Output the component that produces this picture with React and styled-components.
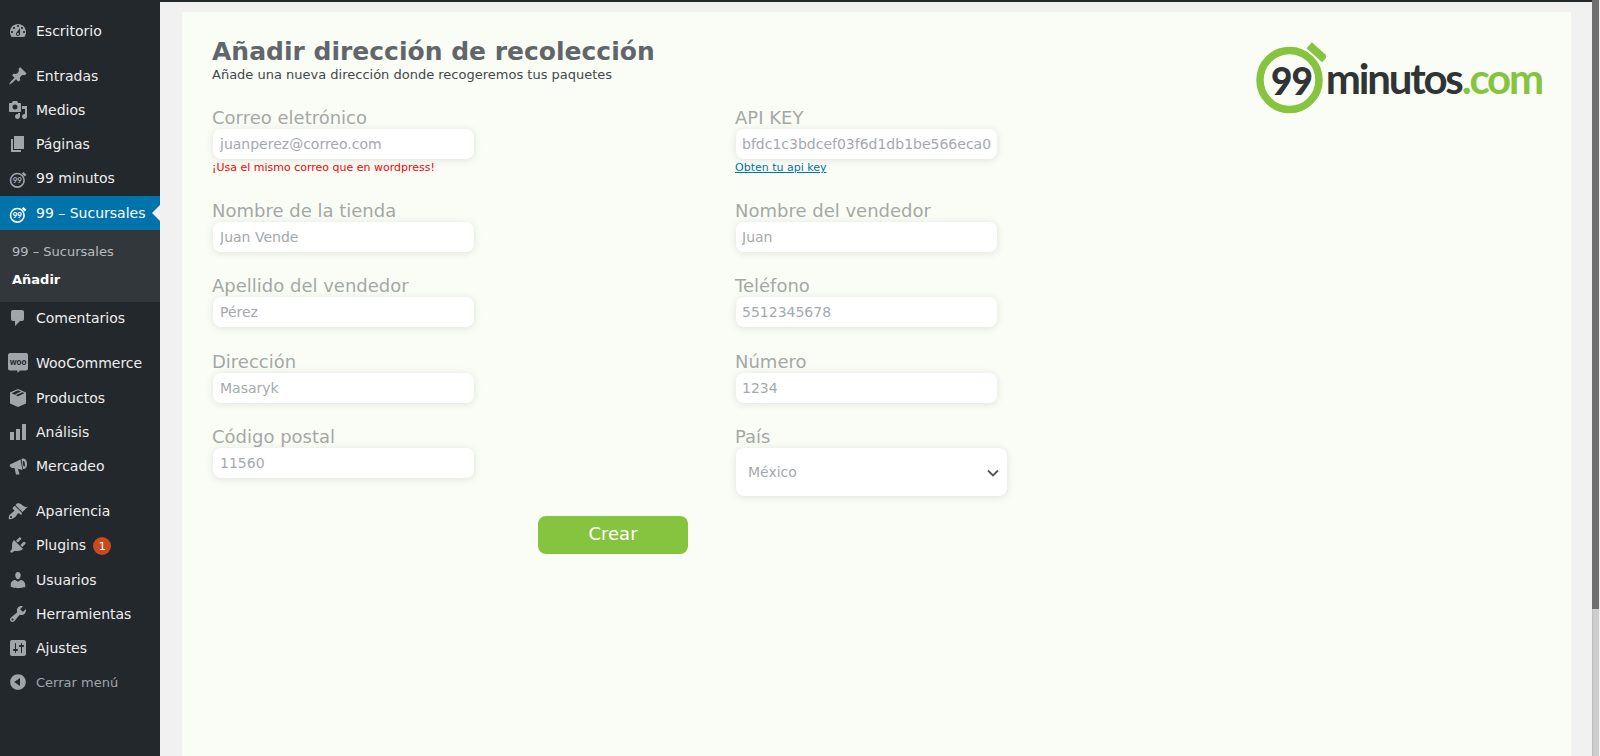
import React from 'react';
import styled, { createGlobalStyle } from 'styled-components';

const Global = createGlobalStyle`
  html, body { margin: 0; padding: 0; height: 100%; overflow: hidden; background: #f1f1f1; }
  * { box-sizing: border-box; }
  body { font-family: "DejaVu Sans", sans-serif; }
`;

const Page = styled.div`display: flex; width: 1600px; height: 756px; overflow: hidden; background: #f1f1f1;`;
const Sidebar = styled.nav`width: 160px; flex: none; height: 756px; background: #23282d; padding-top: 14px;`;
const MenuGroup = styled.div`margin-bottom: ${p => p.$gap || 11}px;`;
const MenuItem = styled.a`
  position: relative; display: flex; align-items: center; height: ${p => p.$h || 34.2}px; padding-left: 8px; gap: 8px;
  margin-top: ${p => p.$mt || 0}px;
  color: ${p => (p.$active ? '#fff' : p.$muted ? '#a0a5aa' : '#eee')};
  background: ${p => (p.$active ? '#0073aa' : 'transparent')};
  font-size: ${p => (p.$muted ? '13px' : '14px')};
  svg { color: ${p => (p.$active ? '#fff' : '#a0a5aa')}; flex: none; }
  ${p => p.$active && `&:after { content: ""; position: absolute; right: 0; top: 50%; margin-top: -8px; border: 8px solid transparent; border-right-color: #f1f1f1; }`}
`;
const Submenu = styled.div`background: #32373c; padding: 7px 0 8px; height: 72px;`;
const SubItem = styled.a`display: flex; align-items: center; height: 28.5px; padding-left: 12px; font-size: 13px; font-weight: ${p => (p.$current ? 700 : 400)}; color: ${p => (p.$current ? '#fff' : 'rgba(240,245,250,.7)')};`;
const Badge = styled.span`display: inline-flex; align-items: center; justify-content: center; width: 18px; height: 18px; border-radius: 50%; background: #ca4a1f; color: #fff; font-size: 11px; margin: 2px 0 0 -1px;`;

const Main = styled.main`flex: 1; min-width: 0; border-top: 2px solid #23282d; padding: 10px 21px 0 22px;`;
const Panel = styled.section`height: 760px; background: #f9fdf6; padding: 24px 30px 0;`;
const Header = styled.header`display: flex; justify-content: space-between; height: 73px;`;
const Title = styled.h1`margin: 0; font-size: 25px; line-height: 31px; font-weight: 700; color: #62666b;`;
const Subtitle = styled.p`margin: 0; font-size: 13px; line-height: 15px; color: #43474b;`;
const Logo = styled.div`display: flex; align-items: flex-start; height: 74px; margin: 6px -1px 0 0; color: #303435;`;
const LogoText = styled.span`font-family: Lato, sans-serif; font-weight: 700; font-size: 42px; line-height: 40px; letter-spacing: -2.2px; margin-top: 16px;`;
const LogoCom = styled.span`color: #86c440;`;

const FormGrid = styled.div`display: grid; grid-template-columns: 523px 523px; row-gap: 25.2px;`;
const Field = styled.div`display: flex; flex-direction: column; align-items: flex-start;`;
const Label = styled.label`font-size: 18px; line-height: 18px; margin-bottom: 2px; color: #a6a8a6;`;
const Input = styled.input`
  width: 261px; height: 30px; margin-left: 1px; border: 0; border-radius: 8px; background: #fff; padding: 0 ${p => p.$pad || 7}px; outline: none;
  font: 14px "DejaVu Sans", sans-serif; color: #a5a9ad; box-shadow: 0 1px 8px rgba(0,0,0,.11);
  &::placeholder { color: #a5a9ad; opacity: 1; }
`;
const Help = styled.div`font-size: 11px; line-height: 18px; color: #f00;`;
const HelpLink = styled.a`font-size: 11px; line-height: 18px; color: #0073aa; text-decoration: underline;`;
const SelectWrap = styled.div`position: relative; width: 271px; height: 48px; margin-left: 1px; border-radius: 8px; background: #fff; box-shadow: 0 1px 8px rgba(0,0,0,.11);
  svg { position: absolute; right: 8px; top: 21px; color: #555; }`;
const Select = styled.select`appearance: none; width: 100%; height: 100%; border: 0; background: transparent; padding: 0 12px; font: 14px "DejaVu Sans", sans-serif; color: #a5a9ad; outline: none;`;
const ButtonRow = styled.div`display: flex; justify-content: center; width: 802px; margin-top: 20px;`;
const Button = styled.button`width: 150px; height: 38px; border: 0; border-radius: 8px; background: #86c440; color: #fff; padding: 0 0 2px; font: 18px "DejaVu Sans", sans-serif;`;

const Scrollbar = styled.div`width: 8px; flex: none; height: 756px; background: #cdcdcd; border-left: 1px solid #bdbdbd; border-right: 1px solid #f1f1f1;`;
const Thumb = styled.div`height: 609px; margin-left: -1px; background: #6f6f6f;`;

const D = ({ d }) => (
  <svg width="20" height="20" viewBox="0 0 20 20" fill="currentColor"><path fillRule="evenodd" d={d} /></svg>
);
const P = {
  dash: 'M3.76 16h12.48c1.1-1.37 1.76-3.11 1.76-5 0-4.42-3.58-8-8-8s-8 3.58-8 8c0 1.89.66 3.63 1.76 5zM10 4c.55 0 1 .45 1 1s-.45 1-1 1-1-.45-1-1 .45-1 1-1zM6 6c.55 0 1 .45 1 1s-.45 1-1 1-1-.45-1-1 .45-1 1-1zm8 0c.55 0 1 .45 1 1s-.45 1-1 1-1-.45-1-1 .45-1 1-1zm-5.37 5.55L12 7v6c0 1.1-.9 2-2 2s-2-.9-2-2c0-.57.24-1.08.63-1.45zM4 10c.55 0 1 .45 1 1s-.45 1-1 1-1-.45-1-1 .45-1 1-1zm12 0c.55 0 1 .45 1 1s-.45 1-1 1-1-.45-1-1 .45-1 1-1zm-5 3c0-.55-.45-1-1-1s-1 .45-1 1 .45 1 1 1 1-.45 1-1z',
  pin: 'M10.44 3.02l1.82-1.82 6.36 6.35-1.83 1.82c-1.05-.68-2.48-.57-3.41.36l-.75.75c-.92.93-1.04 2.35-.35 3.41l-1.83 1.82-2.41-2.41-2.8 2.79c-.42.42-3.38 2.71-3.8 2.29s1.86-3.39 2.28-3.81l2.79-2.79L4.1 9.36l1.83-1.82c1.05.69 2.48.57 3.4-.36l.75-.75c.93-.92 1.05-2.35.36-3.41z',
  media: 'M13 11V4c0-.55-.45-1-1-1h-1.67L9 1H5L3.67 3H2c-.55 0-1 .45-1 1v7c0 .55.45 1 1 1h10c.55 0 1-.45 1-1zM7 4.5c1.38 0 2.5 1.12 2.5 2.5S8.38 9.5 7 9.5 4.5 8.38 4.5 7 5.62 4.5 7 4.5zM14 6h5v10.5c0 1.38-1.12 2.5-2.5 2.5S14 17.88 14 16.5s1.12-2.5 2.5-2.5c.17 0 .34.02.5.05V9h-3V6zm-4 8.05V13h2v3.5c0 1.38-1.12 2.5-2.5 2.5S7 17.88 7 16.5 8.12 14 9.5 14c.17 0 .34.02.5.05z',
  page: 'M6 15V2h10v13H6zm-1 1h8v2H3V5h2v11z',
  comment: 'M5 2h9c1.1 0 2 .9 2 2v7c0 1.1-.9 2-2 2h-2l-5 5v-5H5c-1.1 0-2-.9-2-2V4c0-1.1.9-2 2-2z',
  bars: 'M18 18V2h-4v16h4zm-6 0V7H8v11h4zm-6 0v-8H2v8h4z',
  box: 'M10 1l8 3.6v10.8L10 19l-8-3.6V4.6L10 1zM3.6 5.2L10 8.2l6.4-3-1.9-.9L8.2 7.1 6.9 6.6 13 3.6 10 2.3 3.6 5.2z',
  mega: 'M2 8.500L12.500 3.500 14.500 14 10 12.800 11.500 18.500H8L6.500 12H4.500C2.500 12 1.300 10 2 8.500ZM14.800 2.500C17 2 18.900 4.300 19 7.500 19.200 10.500 17.800 13 15.800 13 15.500 13 15.300 13 15 12.900L13.500 3.300C13.900 2.900 14.300 2.600 14.800 2.500ZM15.300 5C14.800 5.200 14.700 6.500 15 8 15.300 9.700 15.800 10.700 16.300 10.500 16.900 10.300 17.100 9 16.800 7.400 16.500 5.900 15.900 4.800 15.300 5Z',
  brush: 'M14.48 11.06L7.41 3.99l1.5-1.5c.5-.56 2.3-.47 3.51.32 1.21.8 1.43 1.28 2.91 2.1 1.18.64 2.45 1.26 4.45.85zm-.71.71L6.7 4.7 4.93 6.47c-.39.39-.39 1.02 0 1.41l1.06 1.06c.39.39.39 1.03 0 1.42-.6.6-1.43 1.11-2.21 1.69-.35.26-.7.53-1.01.84C1.43 13.23 1 15 .7 16.4c-.1.5-.2 1.1.3 1.6s1.4.3 2 .1c1.4-.4 2.9-.9 4.4-2.4.31-.31.58-.66.84-1.01.58-.78 1.09-1.61 1.69-2.21.39-.39 1.03-.39 1.42 0l1.06 1.06c.39.39 1.02.39 1.41 0zM3 17a1 1 0 1 1 0-2 1 1 0 0 1 0 2z',
  plug: 'M13.11 4.36L9.87 7.6 8 5.73l3.24-3.24c.35-.34 1.05-.2 1.56.32.52.51.66 1.21.31 1.55zm-8 1.77l.91-1.12 9.01 9.01-1.19.84c-.71.71-2.63 1.16-3.82 1.16H6.14L4.9 17.26c-.59.59-1.54.59-2.12 0-.59-.58-.59-1.53 0-2.12l1.24-1.24v-3.88c0-1.13.4-3.19 1.09-3.89zm7.26 3.97l3.24-3.24c.34-.35 1.04-.21 1.55.31.52.51.66 1.21.31 1.55l-3.24 3.25z',
  user: 'M10 9.25c-2.27 0-2.73-3.44-2.73-3.44C7 4.02 7.82 2 9.97 2c2.16 0 2.98 2.02 2.71 3.81 0 0-.41 3.44-2.68 3.44zm0 2.57L12.72 10c2.39 0 4.52 2.33 4.52 4.53v2.49s-3.65 1.13-7.24 1.13c-3.65 0-7.24-1.13-7.24-1.13v-2.49c0-2.25 1.94-4.48 4.47-4.48z',
  tools: 'M16.68 9.77c-1.34 1.34-3.3 1.67-4.95.99l-5.41 6.52c-.99.99-2.59.99-3.58 0s-.99-2.59 0-3.57l6.52-5.42c-.68-1.65-.35-3.61.99-4.95 1.28-1.28 3.12-1.62 4.72-1.06l-2.89 2.89 2.82 2.82 2.86-2.87c.53 1.58.18 3.39-1.08 4.65zM3.81 16.21c.4.39 1.04.39 1.43 0 .4-.4.4-1.04 0-1.43-.39-.4-1.03-.4-1.43 0-.39.39-.39 1.03 0 1.43z',
  settings: 'M18 16V4c0-1.1-.9-2-2-2H4c-1.1 0-2 .9-2 2v12c0 1.1.9 2 2 2h12c1.1 0 2-.9 2-2zM8 11h1c.55 0 1 .45 1 1s-.45 1-1 1H8v1.5c0 .28-.22.5-.5.5s-.5-.22-.5-.5V13H6c-.55 0-1-.45-1-1s.45-1 1-1h1V5.5c0-.28.22-.5.5-.5s.5.22.5.5V11zm5-2h-1c-.55 0-1-.45-1-1s.45-1 1-1h1V5.5c0-.28.22-.5.5-.5s.5.22.5.5V7h1c.55 0 1 .45 1 1s-.45 1-1 1h-1v5.5c0 .28-.22.5-.5.5s-.5-.22-.5-.5V9z',
  collapse: 'M10 2.16c4.33 0 7.84 3.51 7.84 7.84s-3.51 7.84-7.84 7.84S2.16 14.33 2.16 10 5.71 2.16 10 2.16zm2 11.72V6.12L6.18 9.97z',
};

const Timer = () => (
  <svg width="20" height="20" viewBox="0 0 20 20" fill="none" stroke="currentColor">
    <circle cx="9.3" cy="12.3" r="6.800" strokeWidth="1.6" />
    <path d="M14.600 4.800L17.600 7.600" strokeWidth="2.400" />
    <text x="9.3" y="15.100" textAnchor="middle" fontSize="8" fontWeight="900" fontFamily="Lato, sans-serif" letterSpacing="-.2" fill="currentColor" stroke="none">99</text>
  </svg>
);
const Woo = () => (
  <svg width="20" height="20" viewBox="0 0 20 20">
    <path d="M2 0h16c.8 0 2 .6 2 2v13.500c0 1-.9 2-2 2h-6l-2.500 2.500v-2.500H2c-1 0-2-1-2-2V2c0-1 1-2 2-2z" fill="#a0a5aa" />
    <text x="10" y="12.200" textAnchor="middle" fontSize="8.500" fontWeight="900" fontFamily="Lato, sans-serif" fill="#23282d">woo</text>
  </svg>
);
const Chevron = () => (
  <svg width="12" height="8" viewBox="0 0 12 8" fill="none" stroke="currentColor" strokeWidth="1.8"><path d="M1 1.500l5 5 5-5" /></svg>
);
const LogoMark = () => (
  <svg width="70" height="74" viewBox="0 0 70 74">
    <circle cx="33.500" cy="38" r="29.500" fill="none" stroke="#86c440" strokeWidth="7.500" />
    <rect x="50.500" y="6.300" width="21" height="8" transform="rotate(42 61 10.300)" fill="#86c440" />
    <text x="35.500" y="53" textAnchor="middle" fontFamily="Lato, sans-serif" fontWeight="900" fontSize="37" letterSpacing="-1" fill="#303435">99</text>
  </svg>
);

const group1 = [['Entradas', P.pin], ['Medios', P.media], ['Páginas', P.page]];
const group2 = [['Productos', P.box], ['Análisis', P.bars], ['Mercadeo', P.mega]];
const group3 = [['Usuarios', P.user], ['Herramientas', P.tools], ['Ajustes', P.settings]];

const FormField = ({ label, placeholder, value, pad, children }) => (
  <Field>
    <Label>{label}</Label>
    <Input placeholder={placeholder} defaultValue={value} $pad={pad} />
    {children}
  </Field>
);

export default function App() {
  return (
    <Page>
      <Global />
      <Sidebar>
        <MenuGroup><MenuItem $h={34}><D d={P.dash} />Escritorio</MenuItem></MenuGroup>
        <div>
          {group1.map(([t, d]) => <MenuItem $h={34} key={t}><D d={d} />{t}</MenuItem>)}
          <MenuItem $h={34}><Timer />99 minutos</MenuItem>
          <MenuItem $h={34} $mt={1} $active><Timer />99 – Sucursales</MenuItem>
          <Submenu>
            <SubItem>99 – Sucursales</SubItem>
            <SubItem $current>Añadir</SubItem>
          </Submenu>
        </div>
        <MenuGroup $gap={12}><MenuItem $h={32}><D d={P.comment} />Comentarios</MenuItem></MenuGroup>
        <MenuGroup>
          <MenuItem $h={34.7}><Woo />WooCommerce</MenuItem>
          {group2.map(([t, d]) => <MenuItem key={t}><D d={d} />{t}</MenuItem>)}
        </MenuGroup>
        <MenuItem $h={33.9}><D d={P.brush} />Apariencia</MenuItem>
        <MenuItem $h={34.5}><D d={P.plug} />Plugins<Badge>1</Badge></MenuItem>
        {group3.map(([t, d]) => <MenuItem key={t}><D d={d} />{t}</MenuItem>)}
        <MenuItem $muted><D d={P.collapse} />Cerrar menú</MenuItem>
      </Sidebar>
      <Main>
        <Panel>
          <Header>
            <div>
              <Title>Añadir dirección de recolección</Title>
              <Subtitle>Añade una nueva dirección donde recogeremos tus paquetes</Subtitle>
            </div>
            <Logo>
              <LogoMark />
              <LogoText>minutos<LogoCom>.com</LogoCom></LogoText>
            </Logo>
          </Header>
          <FormGrid>
            <FormField label="Correo eletrónico" placeholder="juanperez@correo.com"><Help>¡Usa el mismo correo que en wordpress!</Help></FormField>
            <FormField label="API KEY" pad={6} value="bfdc1c3bdcef03f6d1db1be566eca0"><HelpLink>Obten tu api key</HelpLink></FormField>
            <FormField label="Nombre de la tienda" placeholder="Juan Vende" />
            <FormField label="Nombre del vendedor" placeholder="Juan" pad={6} />
            <FormField label="Apellido del vendedor" placeholder="Pérez" />
            <FormField label="Teléfono" placeholder="5512345678" pad={6} />
            <FormField label="Dirección" placeholder="Masaryk" />
            <FormField label="Número" placeholder="1234" pad={6} />
            <FormField label="Código postal" placeholder="11560" />
            <Field>
              <Label>País</Label>
              <SelectWrap>
                <Select defaultValue="mx"><option value="mx">México</option></Select>
                <Chevron />
              </SelectWrap>
            </Field>
          </FormGrid>
          <ButtonRow><Button>Crear</Button></ButtonRow>
        </Panel>
      </Main>
      <Scrollbar><Thumb /></Scrollbar>
    </Page>
  );
}
